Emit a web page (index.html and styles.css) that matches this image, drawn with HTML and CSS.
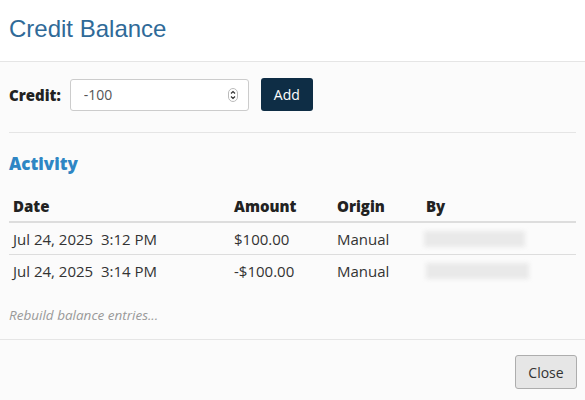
FILE: index.html
```html
<!DOCTYPE html>
<html lang="en">
<head>
    <meta charset="UTF-8">
    <meta name="viewport" content="width=device-width, initial-scale=1.0">
    <title>Credit Balance</title>
    <link rel="stylesheet" href="styles.css">
</head>
<body>
    <div class="modal">
        <div class="modal-header">
            <h1>Credit Balance</h1>
        </div>
        <div class="modal-body">
            <div class="credit-form">
                <label for="credit">Credit:</label>
                <div class="number-input">
                    <input type="text" id="credit" value="-100">
                    <span class="spinner">
                        <svg width="10" height="14" viewBox="0 0 10 14">
                            <rect x="0.5" y="0.5" width="9" height="13" rx="4.5" fill="#fff" stroke="#bbb"/>
                            <path d="M3 5.5 L5 3.5 L7 5.5" fill="none" stroke="#333" stroke-width="1.2"/>
                            <path d="M3 8.5 L5 10.5 L7 8.5" fill="none" stroke="#333" stroke-width="1.2"/>
                        </svg>
                    </span>
                </div>
                <button class="btn-primary">Add</button>
            </div>
            <hr class="divider">
            <h2>Activity</h2>
            <table class="activity">
                <thead>
                    <tr>
                        <th class="col-date">Date</th>
                        <th class="col-amount">Amount</th>
                        <th class="col-origin">Origin</th>
                        <th>By</th>
                    </tr>
                </thead>
                <tbody>
                    <tr>
                        <td>Jul 24, 2025&nbsp; 3:12 PM</td>
                        <td>$100.00</td>
                        <td>Manual</td>
                        <td><span class="redacted"></span></td>
                    </tr>
                    <tr>
                        <td>Jul 24, 2025&nbsp; 3:14 PM</td>
                        <td>-$100.00</td>
                        <td>Manual</td>
                        <td><span class="redacted wide"></span></td>
                    </tr>
                </tbody>
            </table>
            <p class="rebuild">Rebuild balance entries...</p>
        </div>
        <div class="modal-footer">
            <button class="btn-default">Close</button>
        </div>
    </div>
</body>
</html>
```

FILE: styles.css
```css
:root {
    --title-color: #2f6a98;
    --accent-color: #2e86c4;
    --dark-button: #0e2d45;
    --text-color: #333;
    --border-color: #e5e5e5;
}

body {
    margin: 0;
    font-family: 'Open Sans', sans-serif;
    font-size: 15px;
    color: var(--text-color);
    background-color: #fbfbfb;
}

.modal {
    width: 585px;
    height: 400px;
}

.modal-header {
    background-color: white;
    height: 62px;
    border-bottom: 1px solid var(--border-color);
    box-sizing: border-box;
    padding: 0 9px;
    display: flex;
    align-items: center;
}

h1 {
    margin: 0;
    font-family: 'Liberation Sans', Arial, sans-serif;
    font-size: 24px;
    font-weight: normal;
    color: var(--title-color);
    position: relative;
    top: -2px;
}

.modal-body {
    padding: 16px 9px 0;
    height: 261px;
    border-bottom: 1px solid var(--border-color);
}

.credit-form {
    display: flex;
    align-items: center;
    height: 33px;
}

.credit-form label {
    font-weight: 800;
    font-size: 15px;
    color: #222;
    margin-right: 9px;
}

.number-input {
    width: 179px;
    height: 32px;
    box-sizing: border-box;
    border: 1px solid #ccc;
    border-radius: 3px;
    background-color: white;
    display: flex;
    align-items: center;
    padding: 0 10px 0 13px;
    margin-right: 12px;
}

.number-input input {
    flex: 1;
    border: none;
    outline: none;
    font-family: 'Open Sans', sans-serif;
    font-size: 14px;
    color: #555;
    padding: 0;
    min-width: 0;
    background: transparent;
}

.spinner {
    display: flex;
}

.btn-primary {
    background-color: var(--dark-button);
    color: white;
    border: none;
    border-radius: 3px;
    height: 33px;
    width: 52px;
    font-family: 'Open Sans', sans-serif;
    font-size: 14px;
    padding: 0;
}

.divider {
    border: none;
    border-top: 1px solid var(--border-color);
    margin: 21px 0 0;
    width: 567px;
}

h2 {
    margin: 21px 0 12px;
    font-size: 17px;
    font-weight: 800;
    color: var(--accent-color);
    line-height: 20px;
}

.activity {
    width: 567px;
    border-collapse: collapse;
}

.activity th,
.activity td {
    text-align: left;
    padding: 0 4px;
    height: 31px;
}

.activity th {
    font-weight: 800;
    color: #222;
    height: 30px;
    vertical-align: bottom;
    padding-bottom: 5px;
    border-bottom: 2px solid #ddd;
}

.activity td {
    border-bottom: 1px solid #ddd;
    vertical-align: middle;
}

.activity tbody tr:last-child td {
    border-bottom: none;
}

.col-date { width: 213px; }
.col-amount { width: 95px; }
.col-origin { width: 81px; }

.redacted {
    display: block;
    width: 101px;
    height: 16px;
    margin-left: -2px;
    background-color: #e9e9e9;
    filter: blur(2px);
}

.redacted.wide {
    width: 103px;
    margin-left: 0;
}

.rebuild {
    margin: 20px 0 0;
    font-style: italic;
    font-size: 13.5px;
    color: #999;
}

.modal-footer {
    display: flex;
    justify-content: flex-end;
    padding: 15px 8px 0;
}

.btn-default {
    background-color: #e6e6e6;
    border: 1px solid #adadad;
    border-radius: 3px;
    color: var(--text-color);
    font-family: 'Open Sans', sans-serif;
    font-size: 14px;
    width: 62px;
    height: 34px;
    padding: 0;
}
```
